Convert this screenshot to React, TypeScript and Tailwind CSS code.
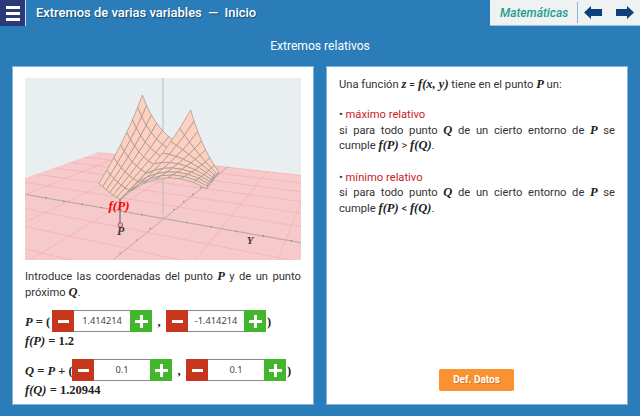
import React from "react";

type Pt = [number, number];

const quad = (a: Pt, c: Pt, b: Pt, t: number): Pt => [
  (1 - t) * (1 - t) * a[0] + 2 * t * (1 - t) * c[0] + t * t * b[0],
  (1 - t) * (1 - t) * a[1] + 2 * t * (1 - t) * c[1] + t * t * b[1],
];

// coons patch: corners p00 p10 p11 p01, with a control point for each edge
const patch = (
  p00: Pt, p10: Pt, p11: Pt, p01: Pt,
  top: Pt, right: Pt, bottom: Pt, left: Pt,
  nu: number, nv: number, ku = 1, kv = 1,
): string[] => {
  const at = (u: number, v: number): Pt => {
    const t = quad(p00, top, p10, u);
    const b = quad(p01, bottom, p11, u);
    const l = quad(p00, left, p01, v);
    const r = quad(p10, right, p11, v);
    const f = (i: 0 | 1) =>
      (1 - v) * t[i] + v * b[i] + (1 - u) * l[i] + u * r[i] -
      ((1 - u) * (1 - v) * p00[i] + u * (1 - v) * p10[i] + (1 - u) * v * p01[i] + u * v * p11[i]);
    return [f(0), f(1)];
  };
  const cells: string[] = [];
  for (let i = 0; i < nu; i++) {
    for (let j = 0; j < nv; j++) {
      const u0 = Math.pow(i / nu, ku), u1 = Math.pow((i + 1) / nu, ku);
      const v0 = Math.pow(j / nv, kv), v1 = Math.pow((j + 1) / nv, kv);
      cells.push([at(u0, v0), at(u1, v0), at(u1, v1), at(u0, v1)].map((p) => p.map((n) => n.toFixed(1)).join(",")).join(" "));
    }
  }
  return cells;
};

const backCells = patch([382, 75], [482, 215], [315, 388], [252, 340], [418, 175], [410, 290], [285, 372], [335, 205], 6, 7);
const frontCells = patch([527, 120], [612, 306], [575, 356], [315, 390], [562, 240], [600, 325], [436, 276], [445, 268], 7, 8, 1, 0.8);

// pink floor grid, lines run out of the two vanishing points
const vp1: Pt = [-2354, -45];
const vp2: Pt = [1030, -30];
const lineThrough = (vp: Pt, p: Pt): Pt[] => {
  const m = (p[1] - vp[1]) / (p[0] - vp[0]);
  return [[0, vp[1] + m * (0 - vp[0])], [900, vp[1] + m * (900 - vp[0])]];
};
const onY = (w: number): Pt => {
  const y = 1 / w - 40;
  return [444 + (445 - y) / 0.81, y];
};
const onX = (w: number): Pt => {
  const y = 1 / w - 40;
  return [444 + (y - 445) / 0.175, y];
};
const floorA = [-3, -2, -1, 0, 1, 2, 3, 4, 5, 6].map((k) => lineThrough(vp1, onY(0.00206 + k * 0.00016)));
const floorB = [-4, -3, -2, -1, 0, 1, 2, 3, 4, 5].map((k) => lineThrough(vp2, onX(0.00206 + k * 0.00012)));
const ticksX = [-5, -4, -3, -2, -1, 1, 2, 3, 4, 5, 6].map((k) => onX(0.00206 + k * 0.00005));
const ticksY = [-5, -4, -3, -2, -1, 1, 2, 3, 4, 5].map((k) => onY(0.00206 + k * 0.000121));

const Graph = () => (
  <svg viewBox="30 24 828 546" className="block w-[276px] h-[182px]">
    <defs>
      <clipPath id="floor">
        <polygon points="250,247 858,315 858,570 30,570 30,325" />
      </clipPath>
    </defs>
    <rect x="30" y="24" width="828" height="546" fill="#e9eff0" />
    <polygon points="250,247 858,315 858,570 30,570 30,325" fill="#f6c9cb" />
    <g clipPath="url(#floor)" stroke="#f7a9ad" strokeWidth="1.8">
      {[...floorA, ...floorB].map((l, i) => (
        <line key={i} x1={l[0][0]} y1={l[0][1]} x2={l[1][0]} y2={l[1][1]} />
      ))}
    </g>
    <line x1="444" y1="24" x2="444" y2="445" stroke="#b9bcbc" strokeWidth="3" />
    <line x1="30" y1="373" x2="858" y2="518" stroke="#a9a6a6" strokeWidth="2.6" />
    <line x1="640" y1="290" x2="300" y2="565" stroke="#b3b0b0" strokeWidth="2.6" />
    {ticksX.map((p, i) => <circle key={i} cx={p[0]} cy={p[1]} r="2.4" fill="#8f8d8d" />)}
    {ticksY.map((p, i) => <circle key={i} cx={p[0]} cy={p[1]} r="2.4" fill="#8f8d8d" />)}
    <g fill="#fdd0bf" stroke="#938e8c" strokeWidth="1.9" strokeLinejoin="round">
      {backCells.map((c, i) => <polygon key={i} points={c} />)}
      {frontCells.map((c, i) => <polygon key={i} points={c} />)}
    </g>
    <polyline points="612,306 590,335 600,312 578,345 575,356" fill="none" stroke="#a5a0a0" strokeWidth="3" />
    <line x1="315" y1="388" x2="315" y2="462" stroke="#77767a" strokeWidth="4" />
    <circle cx="316" cy="465" r="7" fill="#f4a9ae" stroke="#6d5a5c" strokeWidth="2.5" />
    <text x="312" y="421" textAnchor="middle" fontFamily="'Liberation Serif', serif" fontStyle="italic" fontWeight="700" fontSize="39" fill="#ff0000">f(P)</text>
    <text x="317" y="495" textAnchor="middle" fontFamily="'Liberation Serif', serif" fontStyle="italic" fontWeight="700" fontSize="36" fill="#4a3a3c">P</text>
    <text x="705" y="522" textAnchor="middle" fontFamily="'Liberation Serif', serif" fontStyle="italic" fontWeight="700" fontSize="33" fill="#4a3a3c">Y</text>
  </svg>
);

const M = ({ children }: { children: React.ReactNode }) => (
  <span className="[font-family:'Liberation_Serif',serif] italic font-bold text-[12.5px] leading-none text-[#222]">{children}</span>
);

const Stepper = ({ value }: { value: string }) => (
  <div className="flex h-[22px] shrink-0 items-stretch">
    <div className="flex w-[22px] items-center justify-center bg-[#c6361c]">
      <div className="h-[3px] w-[11px] bg-white" />
    </div>
    <div className="flex w-[56px] items-center justify-center border-y border-[#8a8a8a] bg-white font-['Noto_Sans',sans-serif] text-[9.3px] text-[#444]">
      {value}
    </div>
    <div className="relative flex w-[22px] items-center justify-center bg-[#43b62f]">
      <div className="h-[3px] w-[13px] bg-white" />
      <div className="absolute h-[13px] w-[3px] bg-white" />
    </div>
  </div>
);

const Sep = ({ children }: { children: React.ReactNode }) => (
  <span className="[font-family:'Liberation_Serif',serif] font-bold text-[12.5px] leading-none whitespace-nowrap text-[#222]">{children}</span>
);

export default function App() {
  return (
    <div className="flex h-[416px] w-[640px] flex-col overflow-hidden bg-[#2a7db8] font-['Roboto',sans-serif]">
      <header className="flex h-[26px] items-stretch">
        <div className="flex w-[26px] flex-col items-center justify-center gap-[3px] border-r border-[#cfe0ee] bg-[#2a3a78]">
          <div className="h-[3px] w-[14px] bg-white" />
          <div className="h-[3px] w-[14px] bg-white" />
          <div className="h-[3px] w-[14px] bg-white" />
        </div>
        <h1 className="ml-[10px] flex flex-1 items-center text-[12.95px] font-medium text-white [text-shadow:1px_1px_1px_#0006]">
          Extremos de varias variables&nbsp;&nbsp;—&nbsp;&nbsp;Inicio
        </h1>
        <div className="flex w-[150px] items-center border-b border-[#9cc4de] bg-[#eef2f3]">
          <span className="w-[87px] pl-[10px] text-[12px] font-medium italic text-[#1c9c8c]">Matemáticas</span>
          <div className="h-[21px] w-px bg-[#8db6d6]" />
          <svg viewBox="0 0 18 13" className="ml-[6px] h-[13px] w-[18px]">
            <polygon points="0,6.5 7,0 7,3 18,3 18,10 7,10 7,13" fill="#0d3f7c" />
          </svg>
          <svg viewBox="0 0 18 13" className="ml-[14px] h-[13px] w-[18px]">
            <polygon points="18,6.5 11,0 11,3 0,3 0,10 11,10 11,13" fill="#0d3f7c" />
          </svg>
        </div>
      </header>

      <div className="flex h-[40px] items-center justify-center text-[12.1px] text-white">Extremos relativos</div>

      <main className="flex flex-1 gap-3 px-3 pb-[11px]">
        <section className="w-[302px] border border-[#7fb5d9] bg-white px-3 pt-[11px]">
          <Graph />
          <p className="mt-[9px] text-justify text-[11.2px] leading-[16px] text-[#333]">
            Introduce las coordenadas del punto <M>P</M> y de un punto próximo <M>Q</M>.
          </p>
          <div className="mt-[8px] flex items-center">
            <div className="w-[27px] shrink-0"><M>P</M><Sep> = (</Sep></div>
            <Stepper value="1.414214" />
            <div className="w-[14px] shrink-0 text-center"><Sep>,</Sep></div>
            <Stepper value="-1.414214" />
            <div className="ml-px"><Sep>)</Sep></div>
          </div>
          <div className="h-[14px] leading-[14px]"><M>f(P)</M><Sep> = 1.2</Sep></div>
          <div className="mt-[11px] flex items-center">
            <div className="w-[47px] shrink-0 whitespace-nowrap"><M>Q</M><Sep> = </Sep><M>P</M><Sep> + (</Sep></div>
            <Stepper value="0.1" />
            <div className="w-[14px] shrink-0 text-center"><Sep>,</Sep></div>
            <Stepper value="0.1" />
            <div className="ml-px"><Sep>)</Sep></div>
          </div>
          <div className="h-[14px] leading-[14px]"><M>f(Q)</M><Sep> = 1.20944</Sep></div>
        </section>

        <section className="flex w-[302px] flex-col border border-[#7fb5d9] bg-white px-3 pt-[10px] text-[11.2px] leading-[15.6px] text-[#333]">
          <p>Una función <M>z</M> = <M>f(x, y)</M> tiene en el punto <M>P</M> un:</p>
          <p className="mt-[14.6px]">• <span className="text-[#c8202c]">máximo relativo</span></p>
          <p className="text-justify">si para todo punto <M>Q</M> de un cierto entorno de <M>P</M> se cumple <M>f(P)</M> &gt; <M>f(Q)</M>.</p>
          <p className="mt-[15.6px]">• <span className="text-[#c8202c]">mínimo relativo</span></p>
          <p className="text-justify">si para todo punto <M>Q</M> de un cierto entorno de <M>P</M> se cumple <M>f(P)</M> &lt; <M>f(Q)</M>.</p>
          <button className="mt-auto mb-[13px] ml-[100px] h-[22px] w-[75px] rounded-[2px] bg-[#fb9231] text-[10px] font-bold text-white [text-shadow:1px_1px_1px_#0003]">
            Def. Datos
          </button>
        </section>
      </main>
    </div>
  );
}
